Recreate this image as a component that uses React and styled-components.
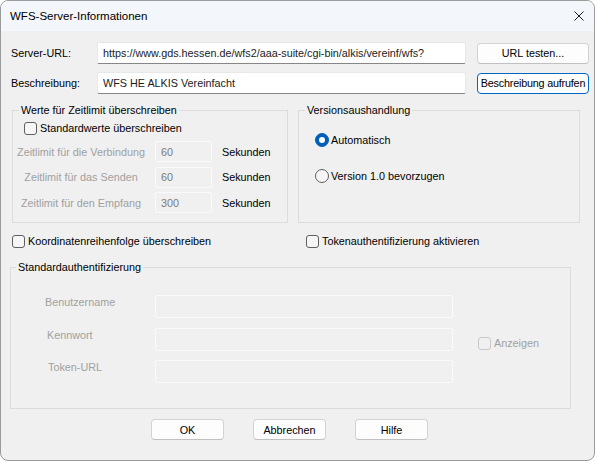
import React from "react";
import styled, { createGlobalStyle } from "styled-components";

const GlobalStyle = createGlobalStyle`
  * { box-sizing: border-box; }
  html, body { margin: 0; padding: 0; background: #ffffff; }
  body {
    font-family: "Liberation Sans", Arial, sans-serif;
    font-size: 10.8px;
    color: #000000;
  }
`;

const Window = styled.div`
  width: 595px;
  height: 461px;
  border: 1px solid #9a9a9a;
  border-radius: 8px;
  overflow: hidden;
  background: #f0f0f0;
  display: flex;
  flex-direction: column;
`;

const TitleBar = styled.div`
  height: 30px;
  flex: none;
  display: flex;
  align-items: center;
  justify-content: space-between;
  padding-left: 9px;
  background: #f3f6fa;
  font-size: 11.5px;
`;

const CloseButton = styled.div`
  width: 30px;
  height: 30px;
  display: flex;
  align-items: center;
  justify-content: center;
`;

const Body = styled.div`
  flex: 1;
  display: flex;
  flex-direction: column;
  padding: 11px 0 0 10px;
`;

const FormRow = styled.div`
  display: grid;
  grid-template-columns: 75px 369px 112px;
  column-gap: 11px;
  align-items: center;
  margin-top: ${(p) => p.$gap || 0}px;
`;

const TextInput = styled.input`
  height: ${(p) => p.$h || 22}px;
  width: 100%;
  margin: 0;
  padding: 0 5px;
  font: inherit;
  color: ${(p) => (p.disabled ? "#7a7a7a" : "#1b1b1b")};
  background: ${(p) => (p.disabled ? "#f0f0f0" : "#ffffff")};
  border: 1px solid ${(p) => (p.disabled ? "#fafafa" : "#e8e8e8")};
  border-bottom-color: ${(p) => (p.disabled ? "#fafafa" : "#878787")};
  border-radius: 2px;
  outline: none;
`;

const PushButton = styled.button`
  height: 21px;
  width: ${(p) => (p.$w ? `${p.$w}px` : "100%")};
  margin: 0;
  padding: 0;
  font: inherit;
  white-space: nowrap;
  letter-spacing: ${(p) => (p.$tight ? "-0.2px" : "normal")};
  color: #000000;
  background: #fdfdfd;
  border: 1px solid ${(p) => (p.$focused ? "#0067c0" : "#d3d3d3")};
  border-bottom-color: ${(p) => (p.$focused ? "#0067c0" : "#c0c0c0")};
  border-radius: 4px;
`;

const Groups = styled.div`
  display: grid;
  grid-template-columns: 276px 282px;
  column-gap: 10px;
  margin: 9px 0 0 1px;
`;

const Group = styled.fieldset`
  margin: ${(p) => p.$top || 0}px 0 0 ${(p) => p.$shift || 0}px;
  padding: 0;
  min-width: 0;
  border: 1px solid #dcdcdc;
  width: ${(p) => (p.$w ? `${p.$w}px` : "auto")};
`;

const Legend = styled.legend`
  margin-left: ${(p) => p.$indent || 6}px;
  padding: 0 2px;
  line-height: 14px;
`;

const CheckRow = styled.label`
  display: flex;
  align-items: center;
  height: 14px;
  padding-left: ${(p) => p.$indent || 0}px;
  color: ${(p) => (p.$disabled ? "#a0a0a0" : "#000000")};
`;

const Box = styled.span`
  width: 13px;
  height: 13px;
  margin-right: 3px;
  flex: none;
  border: 1px solid ${(p) => (p.$disabled ? "#c8c8c8" : "#5f5f5f")};
  border-radius: 3px;
  background: ${(p) => (p.$disabled ? "#f0f0f0" : "#f6f6f6")};
`;

const TimeoutBox = styled.div`
  padding: 4px 0 9px;
`;

const TimeoutGrid = styled.div`
  display: grid;
  grid-template-columns: 136px 57px auto;
  grid-auto-rows: 21px;
  column-gap: 6px;
  row-gap: 4.5px;
  align-items: center;
  margin-top: 6px;
`;

const DimLabel = styled.span`
  color: #a0a0a0;
  text-align: ${(p) => p.$align || "left"};
  padding-left: ${(p) => p.$indent || 0}px;
`;

const Unit = styled.span`
  padding-left: 4px;
`;

const RadioList = styled.div`
  display: flex;
  flex-direction: column;
  gap: 20px;
  padding: 15px 0 0 16px;
`;

const RadioRow = styled.label`
  display: flex;
  align-items: center;
  height: 16px;
`;

const Dot = styled.span`
  width: 14px;
  height: 14px;
  margin-right: 2px;
  flex: none;
  border-radius: 50%;
  display: flex;
  align-items: center;
  justify-content: center;
  background: ${(p) => (p.$on ? "#005fb8" : "#f6f6f6")};
  border: 1px solid ${(p) => (p.$on ? "#005fb8" : "#5f5f5f")};
  &::after {
    content: "";
    display: ${(p) => (p.$on ? "block" : "none")};
    width: 6px;
    height: 6px;
    border-radius: 50%;
    background: #ffffff;
  }
`;

const OptionRow = styled.div`
  display: grid;
  grid-template-columns: 276px 282px;
  column-gap: 10px;
  margin: 11px 0 0 1px;
`;

const AuthGrid = styled.div`
  display: grid;
  grid-template-columns: 144px 298px auto;
  grid-template-rows: 23px 23px 23px;
  row-gap: 9.5px;
  padding: 21px 0 25px;
`;

const AuthLabel = styled(DimLabel)`
  grid-column: 1;
  grid-row: ${(p) => p.$row};
  align-self: start;
  line-height: 14px;
`;

const AuthInput = styled(TextInput)`
  grid-column: 2;
  grid-row: ${(p) => p.$row};
`;

const AuthOption = styled.div`
  grid-column: 3;
  grid-row: 2;
  align-self: center;
  margin-top: 8px;
  padding-left: 25px;
`;

const Footer = styled.div`
  display: flex;
  gap: 29px;
  margin-top: 10px;
  padding-left: 140px;
`;

function CheckBox({ children, disabled, indent }) {
  return (
    <CheckRow $disabled={disabled} $indent={indent}>
      <Box $disabled={disabled} />
      {children}
    </CheckRow>
  );
}

const timeouts = [
  { label: "Zeitlimit für die Verbindung", value: "60" },
  { label: "Zeitlimit für das Senden", value: "60" },
  { label: "Zeitlimit für den Empfang", value: "300" },
];

const authFields = [
  { label: "Benutzername", indent: 34 },
  { label: "Kennwort", indent: 36 },
  { label: "Token-URL", indent: 37 },
];

export default function App() {
  return (
    <>
      <GlobalStyle />
      <Window>
        <TitleBar>
          <span>WFS-Server-Informationen</span>
          <CloseButton>
            <svg width="10" height="10" viewBox="0 0 10 10">
              <path d="M0.5 0.5 L9.5 9.5 M9.5 0.5 L0.5 9.5" stroke="#1a1a1a" strokeWidth="1" fill="none" />
            </svg>
          </CloseButton>
        </TitleBar>

        <Body>
          <FormRow>
            <span>Server-URL:</span>
            <TextInput readOnly value="https://www.gds.hessen.de/wfs2/aaa-suite/cgi-bin/alkis/vereinf/wfs?" />
            <PushButton>URL testen...</PushButton>
          </FormRow>
          <FormRow $gap={8}>
            <span>Beschreibung:</span>
            <TextInput readOnly value="WFS HE ALKIS Vereinfacht" />
            <PushButton $focused $tight>Beschreibung aufrufen</PushButton>
          </FormRow>

          <Groups>
            <Group>
              <Legend>Werte für Zeitlimit überschreiben</Legend>
              <TimeoutBox>
                <CheckBox indent={11}>Standardwerte überschreiben</CheckBox>
                <TimeoutGrid>
                  {timeouts.map((t) => (
                    <React.Fragment key={t.label}>
                      <DimLabel $align="center">{t.label}</DimLabel>
                      <TextInput $h={21} disabled value={t.value} readOnly />
                      <Unit>Sekunden</Unit>
                    </React.Fragment>
                  ))}
                </TimeoutGrid>
              </TimeoutBox>
            </Group>
            <Group>
              <Legend>Versionsaushandlung</Legend>
              <RadioList>
                <RadioRow>
                  <Dot $on />
                  Automatisch
                </RadioRow>
                <RadioRow>
                  <Dot />
                  Version 1.0 bevorzugen
                </RadioRow>
              </RadioList>
            </Group>
          </Groups>

          <OptionRow>
            <CheckBox>Koordinatenreihenfolge überschreiben</CheckBox>
            <CheckBox indent={8}>Tokenauthentifizierung aktivieren</CheckBox>
          </OptionRow>

          <Group $shift={-1} $w={561} $top={12}>
            <Legend $indent={5}>Standardauthentifizierung</Legend>
            <AuthGrid>
              {authFields.map((f, i) => (
                <React.Fragment key={f.label}>
                  <AuthLabel $indent={f.indent} $row={i + 1}>
                    {f.label}
                  </AuthLabel>
                  <AuthInput $h={23} $row={i + 1} disabled readOnly value="" />
                </React.Fragment>
              ))}
              <AuthOption>
                <CheckBox disabled>Anzeigen</CheckBox>
              </AuthOption>
            </AuthGrid>
          </Group>

          <Footer>
            <PushButton $w={73}>OK</PushButton>
            <PushButton $w={73}>Abbrechen</PushButton>
            <PushButton $w={73}>Hilfe</PushButton>
          </Footer>
        </Body>
      </Window>
    </>
  );
}
